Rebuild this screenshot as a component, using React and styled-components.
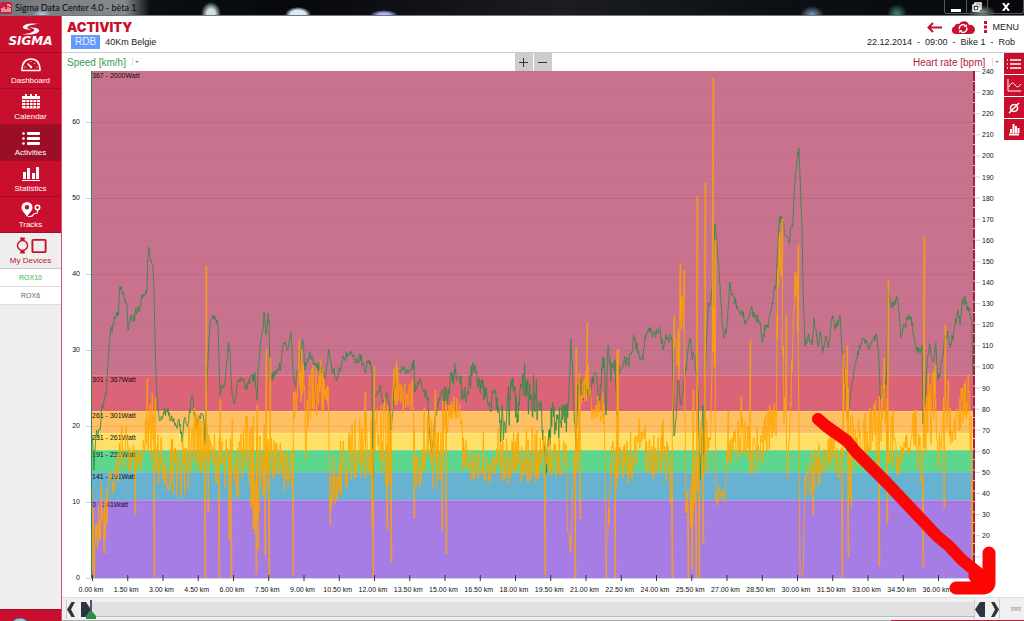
import React, { useState } from "react";
import styled, { createGlobalStyle, css } from "styled-components";

const GlobalStyle = createGlobalStyle`
  :root {
    --red: #c8102e;
    --darkRed: #9a0f26;
    --paleGray: #eeeeee;
    --ink: #2b3440;
    --green: #2e8b45;
  }

  * {
    box-sizing: border-box;
  }

  body {
    margin: 0;
    font-family: "Liberation Sans", Arial, sans-serif;
    color: #222;
    background: #fff;
  }

  button {
    border: none;
    padding: 0;
    background: none;
    font: inherit;
    color: inherit;
    cursor: pointer;
  }

  svg {
    display: block;
  }
`;

const Window = styled.div`
  min-height: 100vh;
  display: flex;
  flex-direction: column;
`;

/* title bar */

const TitleBar = styled.div`
  height: 16px;
  display: flex;
  justify-content: space-between;
  border-bottom: 1px solid #77747a;
  background:
    radial-gradient(ellipse 9px 6px at 42px 15px, #b9d6ee, transparent),
    linear-gradient(90deg, #74787c, #858a8e 125px, transparent 150px),
    radial-gradient(ellipse 10px 12px at 211px 14px, #cfe3da 40%, transparent),
    radial-gradient(ellipse 13px 8px at 298px 15px, #dbeaf7 60%, transparent),
    radial-gradient(ellipse 14px 5px at 384px 15px, #a9b4ff 40%, transparent),
    radial-gradient(ellipse 12px 9px at 812px 15px, #7ea6c8, transparent),
    radial-gradient(ellipse 10px 10px at 897px 14px, #3f8f72, transparent),
    radial-gradient(ellipse 14px 8px at 982px 13px, #8aa894, transparent),
    linear-gradient(90deg, #0d1218, #07090c 30%, #1b1d20 55%, #0c1014 75%, #07090b);
`;

const WindowTitle = styled.div`
  display: flex;
  align-items: center;
  gap: 3px;
  font-family: Lato, "Open Sans", sans-serif;
  font-size: 9px;
  line-height: 15px;
  color: #08090a;
`;

const WindowButtons = styled.div`
  display: flex;
  height: 14px;
  border: 1px solid #55585b;
  border-top: none;
  border-radius: 0 0 3px 3px;
`;

const WindowButton = styled.button`
  width: ${({ $wide }) => ($wide ? "36px" : "21px")};
  display: flex;
  align-items: center;
  justify-content: center;

  & + & {
    border-left: 1px solid #55585b;
  }
`;

/* sidebar */

const Body = styled.div`
  flex: 1;
  display: flex;
`;

const Sidebar = styled.aside`
  width: 62px;
  flex-shrink: 0;
  display: flex;
  flex-direction: column;
  background: var(--paleGray);
  border-right: 1px solid #d9506a;
`;

const Logo = styled.div`
  height: 37px;
  padding-top: 7px;
  display: flex;
  flex-direction: column;
  align-items: center;
  background: var(--red);
  border-bottom: 1px solid #a50d26;
  color: #fff;
`;

const LogoText = styled.span`
  font-family: "DejaVu Sans", sans-serif;
  font-size: 12px;
  line-height: 13px;
  font-weight: bold;
  font-style: italic;
`;

const NavItem = styled.button`
  height: 36px;
  padding-top: 5px;
  display: flex;
  flex-direction: column;
  align-items: center;
  justify-content: space-between;
  background: var(--red);
  border-bottom: 1px solid #a50d26;
  color: #fff;
  font-size: 8px;
  line-height: 14px;

  ${({ $active }) =>
    $active &&
    css`
      background: var(--darkRed);
    `}

  ${({ $light }) =>
    $light &&
    css`
      background: var(--paleGray);
      border-bottom: 1px solid #ccc;
      color: var(--red);
      padding-top: 4px;
    `}
`;

const Device = styled.button`
  height: 18px;
  background: #fff;
  border-bottom: 1px solid #ddd;
  font-size: 7px;
  color: ${({ $connected }) => ($connected ? "#35b53c" : "#666")};
`;

const SidebarFooter = styled.div`
  height: 13px;
  margin-top: auto;
  padding-left: 9px;
  background: var(--red);
  border-top: 1px solid #a50d26;
  overflow: hidden;
`;

/* header */

const Main = styled.main`
  flex: 1;
  min-width: 0;
  display: flex;
  flex-direction: column;
`;

const Header = styled.header`
  height: 37px;
  padding: 3px 5px 0;
  display: flex;
  justify-content: space-between;
  border-bottom: 1px solid #ccc;
`;

const Heading = styled.h1`
  margin: 0;
  font-family: Inter, sans-serif;
  font-size: 13px;
  line-height: 16px;
  font-weight: 900;
  color: var(--red);
`;

const Track = styled.div`
  display: flex;
  align-items: center;
  gap: 5px;
  padding-left: 4px;
  font-size: 9px;
`;

const Badge = styled.span`
  padding: 0 4px;
  background: #6699ff;
  color: #e8f0ff;
  font-size: 10px;
  line-height: 14px;
`;

const HeaderRight = styled.div`
  display: flex;
  flex-direction: column;
  align-items: flex-end;
  font-size: 9px;
`;

const Actions = styled.div`
  display: flex;
  align-items: center;
  gap: 9px;
  height: 16px;
`;

const MenuButton = styled.button`
  display: flex;
  align-items: center;
  gap: 6px;
`;

const Meta = styled.div`
  display: flex;
  gap: 5px;
  padding-right: 4px;
  line-height: 14px;
`;

/* chart */

const Content = styled.div`
  flex: 1;
  display: flex;
`;

const ChartColumn = styled.section`
  flex: 1;
  min-width: 0;
`;

const AxisBar = styled.div`
  height: 18px;
  padding: 0 5px;
  display: grid;
  grid-template-columns: 1fr auto 1fr;
  align-items: center;
`;

const AxisPicker = styled.label`
  display: flex;
  align-items: center;
  gap: 6px;
  justify-self: ${({ $right }) => ($right ? "end" : "start")};
  color: ${({ $right }) => ($right ? "#b01c3a" : "#3c9a52")};

  select {
    appearance: none;
    border: none;
    padding: 0;
    background: none;
    color: inherit;
    font-family: inherit;
    font-size: 10px;
  }
`;

const Caret = styled.span`
  height: 8px;
  padding: 3px 0 0 2px;
  border-left: 1px solid #ddd;

  &::after {
    content: "";
    display: block;
    border: 2px solid transparent;
    border-top-color: #888;
  }
`;

const ZoomButtons = styled.div`
  display: flex;
  gap: 1px;
`;

const ZoomButton = styled.button`
  width: 18px;
  height: 18px;
  display: flex;
  align-items: center;
  justify-content: center;
  background: #cdcdcd;
`;

const Chart = styled.svg`
  width: 100%;
  height: auto;
  overflow: visible;

  text {
    font-size: 7px;
    fill: #111;
  }
`;

const ToolRail = styled.div`
  width: 20px;
  display: flex;
  flex-direction: column;
  gap: 1px;
`;

const ToolButton = styled.button`
  height: 21px;
  display: flex;
  align-items: center;
  justify-content: center;
  background: var(--red);
`;

/* range bar under the chart */

const RangeBar = styled.div`
  height: 23px;
  padding: 2px 3px 2px 4px;
  display: flex;
  align-items: center;
  background: #f0f0f0;
  border-top: 1px solid #ddd;
`;

const RangeTrack = styled.div`
  position: relative;
  flex: 1;
  height: 15px;
  background: #e1e1e1;
  border-bottom: 1px solid #bbb;
`;

const Marker = styled.svg`
  position: absolute;
  left: -6px;
  top: -2px;
`;

const Handles = styled.div`
  height: 20px;
  display: flex;
  align-items: center;
  gap: 6px;
  border: solid #ccc;
  border-width: ${({ $end }) => ($end ? "0 1px" : "0 0 0 1px")};
`;

const Grip = styled.span`
  width: 10px;
  height: 4px;
  margin-left: 11px;
  background: #c8c8c8;
  border-top: 1px solid #bbb;
`;

const StatusLine = styled.div`
  height: 2px;
  display: flex;
  background: #aaa;

  &::after {
    content: "";
    width: 133px;
    margin-left: auto;
    background: #b5213d;
  }
`;

/* ---- chart data, in plot units ---- */

const LEFT = 92;
const RIGHT = 974;
const TOP = 71;
const BOTTOM = 578;

const zones = [
  { label: "367 - 2000Watt", y: 71, color: "#c8728d" },
  { label: "301 - 367Watt", y: 375, color: "#db6478" },
  { label: "261 - 301Watt", y: 411, color: "#ffc062" },
  { label: "231 - 261Watt", y: 433, color: "#ffe066" },
  { label: "191 - 231Watt", y: 450, color: "#5cd68c" },
  { label: "141 - 191Watt", y: 472, color: "#66b2d0" },
  { label: "0 - 141Watt", y: 500, color: "#a67de4" },
];

const speed = [
  92, 435, 94, 470, 96, 436, 100, 430, 102, 405, 104, 400, 106, 395, 108, 362,
  110, 335, 113, 325, 115, 318, 118, 316, 120, 286, 124, 296, 127, 310, 128, 330,
  130, 320, 133, 320, 136, 312, 140, 308, 143, 295, 147, 288, 148, 255, 149, 247,
  151, 260, 153, 265, 154, 290, 155, 340, 156, 375, 158, 410, 160, 420, 164, 414,
  168, 408, 171, 420, 175, 423, 180, 424, 182, 442, 184, 420, 188, 425, 192, 395,
  194, 415, 197, 425, 201, 413, 204, 420, 205, 445, 206, 410, 207, 380, 209, 340,
  211, 320, 213, 315, 217, 320, 218, 325, 220, 395, 222, 388, 225, 384, 228, 345,
  230, 350, 232, 395, 234, 404, 237, 385, 242, 380, 247, 388, 250, 378, 255, 376,
  256, 390, 257, 400, 258, 370, 260, 350, 263, 330, 264, 312, 266, 335, 268, 313,
  269, 320, 270, 378, 276, 374, 281, 365, 283, 345, 285, 342, 288, 348, 291, 333,
  293, 370, 295, 384, 299, 368, 301, 350, 303, 341, 305, 370, 310, 353, 315, 365,
  320, 367, 325, 375, 329, 350, 332, 370, 337, 377, 342, 362, 348, 354, 353, 357,
  358, 361, 360, 354, 365, 371, 369, 360, 372, 372, 373, 500, 374, 400, 376, 395,
  380, 385, 383, 402, 387, 395, 390, 412, 391, 430, 394, 390, 398, 370, 402, 368,
  406, 374, 411, 370, 414, 363, 415, 392, 420, 378, 424, 390, 428, 397, 429, 425,
  431, 453, 434, 430, 438, 405, 442, 390, 448, 400, 450, 378, 455, 373, 459, 377,
  463, 395, 467, 395, 472, 370, 476, 373, 482, 388, 487, 395, 490, 408, 495, 390,
  500, 420, 505, 428, 510, 400, 515, 398, 518, 422, 520, 390, 524, 378, 527, 390,
  530, 400, 535, 395, 540, 410, 543, 430, 546, 465, 549, 440, 552, 410, 556, 430,
  560, 420, 562, 405, 565, 420, 568, 405, 570, 370, 571, 339, 573, 385, 576, 440,
  578, 385, 583, 390, 587, 395, 592, 383, 594, 373, 599, 398, 602, 372, 604, 358,
  606, 415, 608, 345, 611, 373, 615, 360, 617, 415, 619, 365, 624, 360, 629, 363,
  634, 337, 638, 352, 643, 360, 645, 335, 650, 332, 655, 333, 660, 329, 663, 350,
  666, 338, 672, 338, 674, 436, 676, 420, 678, 380, 681, 405, 686, 370, 690, 338,
  692, 360, 694, 355, 698, 390, 700, 480, 703, 405, 704, 470, 705, 410, 706, 350,
  708, 310, 710, 303, 712, 290, 713, 270, 715, 224, 718, 260, 720, 285, 722, 320,
  724, 338, 727, 327, 729, 300, 730, 282, 732, 295, 736, 302, 740, 315, 742, 310,
  745, 324, 751, 309, 756, 318, 760, 322, 762, 341, 766, 325, 768, 328, 772, 303,
  776, 285, 779, 225, 780, 219, 783, 222, 785, 235, 789, 243, 793, 220, 795, 180,
  798, 155, 799, 148, 800, 175, 802, 225, 803, 290, 805, 346, 808, 335, 812, 345,
  814, 318, 818, 347, 820, 332, 823, 350, 826, 337, 828, 348, 832, 319, 836, 328,
  840, 315, 842, 350, 844, 370, 847, 405, 848, 419, 851, 390, 855, 365, 860, 345,
  866, 340, 870, 347, 873, 340, 877, 335, 879, 360, 880, 395, 883, 393, 886, 385,
  887, 360, 888, 290, 892, 308, 895, 300, 898, 302, 901, 335, 905, 325, 909, 319,
  912, 322, 916, 350, 920, 353, 922, 345, 923, 424, 926, 382, 928, 355, 930, 345,
  933, 362, 936, 347, 938, 380, 942, 362, 945, 335, 948, 335, 950, 348, 954, 330,
  958, 310, 960, 325, 962, 302, 964, 305, 965, 296, 967, 310, 970, 313, 972, 325,
  973, 400,
];

// x, middle, swing
const power = [
  [92, 530, 45], [100, 510, 30], [106, 515, 28], [109, 485, 22], [114, 470, 22],
  [120, 455, 28], [126, 445, 24], [134, 458, 18], [142, 465, 14], [147, 430, 26],
  [153, 430, 36], [158, 450, 34], [165, 480, 16], [172, 460, 34], [184, 470, 32],
  [196, 445, 34], [204, 450, 34], [212, 450, 26], [222, 465, 28], [238, 470, 30],
  [246, 440, 28], [254, 490, 60], [262, 460, 40], [276, 460, 20], [292, 475, 26],
  [294, 400, 20], [301, 370, 34], [306, 430, 40], [310, 398, 30], [318, 390, 30],
  [328, 392, 14], [330, 490, 24], [340, 470, 30], [352, 450, 30], [366, 445, 34],
  [380, 440, 40], [390, 450, 60], [394, 385, 24], [398, 380, 24], [402, 400, 14],
  [413, 388, 22], [415, 470, 22], [421, 470, 16], [424, 440, 36], [433, 455, 36],
  [441, 440, 50], [447, 420, 18], [452, 408, 12], [460, 404, 14], [463, 450, 22],
  [472, 470, 16], [484, 455, 24], [489, 480, 12], [498, 455, 30], [520, 460, 30],
  [535, 455, 30], [552, 455, 22], [566, 460, 20], [568, 540, 10], [571, 545, 6],
  [573, 470, 16], [576, 480, 50], [580, 400, 16], [587, 380, 30], [592, 415, 10],
  [604, 405, 20], [606, 555, 20], [609, 510, 20], [611, 460, 28], [624, 470, 26],
  [640, 440, 28], [652, 460, 26], [662, 445, 26], [671, 480, 26], [674, 350, 20],
  [679, 350, 30], [681, 310, 26], [684, 315, 15], [686, 520, 26], [693, 500, 30],
  [698, 470, 40], [704, 450, 50], [710, 450, 20], [714, 290, 60], [716, 500, 10],
  [720, 490, 12], [725, 500, 3], [727, 455, 12], [736, 440, 24], [742, 430, 26],
  [750, 455, 26], [762, 445, 22], [772, 420, 30], [776, 440, 30], [778, 260, 30],
  [781, 255, 30], [784, 400, 40], [788, 475, 12], [791, 390, 20], [795, 290, 18],
  [797, 285, 20], [799, 440, 30], [800, 576, 1], [803, 576, 1], [805, 490, 16],
  [812, 470, 26], [824, 462, 18], [832, 445, 20], [841, 465, 20], [845, 390, 40],
  [850, 450, 50], [860, 445, 24], [880, 430, 40], [884, 390, 14], [888, 430, 40],
  [893, 450, 28], [898, 465, 12], [906, 445, 14], [914, 425, 24], [920, 455, 30],
  [926, 430, 50], [934, 400, 34], [940, 460, 24], [946, 410, 40], [954, 432, 12],
  [960, 410, 20], [968, 400, 24], [971, 440, 30], [973, 540, 30],
];

const spikes = [
  [94, 578], [104, 553], [135, 515], [147, 379], [152, 393], [155, 398], [154, 577],
  [194, 408], [205, 578], [206, 266], [208, 512], [219, 578], [220, 400], [229, 540],
  [231, 578], [232, 420], [253, 417], [256, 574], [258, 550], [257, 405], [266, 349],
  [265, 555], [269, 578], [270, 358], [293, 575], [299, 340], [302, 365], [316, 368],
  [320, 360], [330, 525], [365, 392], [372, 526], [374, 366], [373, 578], [387, 530],
  [391, 562], [396, 366], [412, 380], [414, 518], [424, 408], [435, 390], [442, 530],
  [446, 554], [545, 575], [570, 552], [575, 578], [576, 348], [580, 519], [579, 373],
  [587, 323], [606, 578], [615, 578], [617, 350], [618, 350], [663, 420], [672, 578],
  [674, 316], [680, 264], [684, 270], [688, 578], [692, 569], [693, 390], [696, 578],
  [697, 196], [699, 578], [703, 543], [705, 183], [713, 78], [715, 240], [717, 505],
  [728, 411], [741, 397], [750, 341], [777, 314], [779, 237], [782, 219], [786, 315],
  [785, 404], [795, 272], [798, 245], [813, 515], [842, 578], [843, 354], [848, 557],
  [847, 346], [851, 507], [865, 413], [879, 566], [884, 358], [888, 281], [887, 524],
  [893, 410], [923, 567], [924, 237], [928, 373], [935, 365], [944, 508], [945, 325],
  [948, 380], [964, 384], [968, 375], [972, 562],
];

const makeRandom = (seed) => () => {
  seed = (seed * 16807) % 2147483647;
  return (seed / 2147483647) * 2 - 1;
};

const toPath = (points) => "M" + points.map((p) => p.map((n) => n.toFixed(1)).join(",")).join("L");

const buildSpeed = () => {
  const random = makeRandom(77);
  const points = [];
  for (let i = 0; i < speed.length - 2; i += 2) {
    const [x0, y0, x1, y1] = speed.slice(i, i + 4);
    const rough = x0 > 495 && x0 < 570 ? 22 : x0 > 440 && x0 < 620 ? 11 : 5;
    points.push([x0, y0]);
    for (let x = x0 + 0.7; x < x1; x += 0.7) {
      points.push([x, y0 + ((y1 - y0) * (x - x0)) / (x1 - x0) + random() * rough]);
    }
  }
  return toPath(points);
};

const buildPower = () => {
  const random = makeRandom(4242);
  const points = [];
  for (let i = 0; i < power.length - 1; i++) {
    const [x0, mid0, swing0] = power[i];
    const [x1, mid1, swing1] = power[i + 1];
    for (let x = x0; x < x1; x += 0.6) {
      const t = (x - x0) / (x1 - x0);
      const y = mid0 + (mid1 - mid0) * t + random() * (swing0 + (swing1 - swing0) * t);
      points.push([x, Math.min(y, BOTTOM)]);
    }
  }
  spikes.forEach(([x, y]) => {
    const at = points.findIndex((p) => p[0] >= x);
    points.splice(at, 0, [x, y], [x + 0.8, y]);
  });
  return toPath(points);
};

const speedPath = buildSpeed();
const powerPath = buildPower();

const range = (count) => Array.from({ length: count }, (_, i) => i);

const ActivityChart = () => (
  <Chart viewBox="62 71 942 526" role="img" aria-label="Speed and power over distance">
    {zones.map(({ y, color }, i) => (
      <rect
        key={color}
        x={LEFT}
        y={y}
        width={RIGHT - LEFT}
        height={(zones[i + 1] ? zones[i + 1].y : BOTTOM) - y}
        fill={color}
      />
    ))}
    {zones.slice(1).map(({ y }) => (
      <path key={y} d={`M${LEFT} ${y + 0.5}H${RIGHT}`} stroke="#fff" strokeOpacity="0.2" />
    ))}
    {range(6).map((i) => (
      <path key={i} d={`M${LEFT} ${122.5 + i * 76}H${RIGHT}`} stroke="#803050" strokeOpacity="0.12" />
    ))}
    {range(24).map((i) => (
      <path key={i} d={`M${LEFT} ${71.5 + i * 21.1}H${RIGHT}`} stroke="#803050" strokeOpacity="0.04" />
    ))}

    {zones.map(({ label, y }) => (
      <text key={label} x="92" y={y + 7}>
        {label}
      </text>
    ))}

    <path d={speedPath} fill="none" stroke="#2e8b45" strokeWidth="1" strokeOpacity="0.85" />
    <path d={powerPath} fill="none" stroke="#ffa500" strokeWidth="1" strokeOpacity="0.82" />

    {/* left axis */}
    <path d={`M91.5 ${TOP}V${BOTTOM}`} stroke="#2e8b45" />
    {range(7).map((i) => (
      <g key={i}>
        <path d={`M86 ${BOTTOM - i * 76 + 0.5}h5`} stroke="#c5d5e3" />
        <text x="80" y={BOTTOM - i * 76 + 2} textAnchor="end">
          {i * 10}
        </text>
      </g>
    ))}

    {/* right axis */}
    <path d={`M974 ${TOP}V${BOTTOM}`} stroke="#a8203c" strokeWidth="2" />
    {range(48).map((i) => (
      <path key={i} d={`M973 ${81.5 + i * 10.5}h2`} stroke="#f0c8d0" />
    ))}
    {range(24).map((i) => {
      const y = 71.5 + i * 21.1;
      return (
        <g key={i}>
          <path d={`M975 ${y}h5`} stroke="#c5d5e3" />
          {i < 23 && (
            <text x="982" y={y + 2.5}>
              {240 - i * 10}
            </text>
          )}
        </g>
      );
    })}

    {/* distance axis */}
    <path d={`M86 ${BOTTOM + 0.5}H978`} stroke="#c5d5e3" />
    {range(25).map((i) => (
      <g key={i}>
        <path d={`M${92.5 + i * 35.25} 575v6`} stroke="#333" />
        <text x={91 + i * 35.25} y="592" textAnchor="middle">
          {(i * 1.5).toFixed(2)} km
        </text>
      </g>
    ))}

    {/* annotation */}
    <g fill="none" stroke="#fb0505" strokeLinecap="round" strokeLinejoin="round">
      <path d="M818 419L826 426L847 441L856 452L887 483L937 536L949 546L962 560L982 576" strokeWidth="12" />
      <path d="M989 553V582Q989 588 983 588L956 588" strokeWidth="13" />
      <path d="M976 576L984 583" strokeWidth="15" />
    </g>
  </Chart>
);

/* ---- icons ---- */

const DashboardIcon = () => (
  <svg width="20" height="14" viewBox="0 0 20 14" fill="none" stroke="#fff" strokeWidth="1.5">
    <path d="M1 12.5C1 5 4.500 1 10 1s9 4 9 11.500z" strokeLinejoin="round" />
    <path d="M10 9L6.500 5.500" />
    <circle cx="10" cy="9" r="1.200" fill="#fff" stroke="none" />
    <path d="M3.500 9h1M15.500 9h1M14 5l-.8.8M10 3v1" strokeWidth="1" />
  </svg>
);

const CalendarIcon = () => (
  <svg width="20" height="15" viewBox="0 0 20 15" fill="#fff">
    <path d="M1 2h18v3H1zM4 0h2v3H4zM9 0h2v3H9zM14 0h2v3h-2z" />
    <path d="M1 5.500h18V13q0 1.500-1.500 1.500h-15Q1 14.500 1 13z" />
    <path d="M1 5.500h18M1 8.500h18M1 11.500h18M5 6v8M8.500 6v8M12 6v8M15.500 6v8" stroke="#c8102e" strokeWidth=".9" />
  </svg>
);

const ListIcon = () => (
  <svg width="18" height="15" viewBox="0 0 18 15" fill="#fff">
    {[2, 7, 12].map((y) => (
      <g key={y}>
        <circle cx="1.500" cy={y + 1.500} r="1.300" />
        <rect x="5" y={y} width="13" height="3" rx="1" />
      </g>
    ))}
  </svg>
);

const StatisticsIcon = () => (
  <svg width="18" height="15" viewBox="0 0 18 15" fill="#fff">
    <path d="M0 14h18v1H0zM1 6h3v7H1zM5 2h3v11H5zM10 7h3v6h-3zM14 1h3v12h-3z" />
  </svg>
);

const TracksIcon = () => (
  <svg width="20" height="16" viewBox="0 0 20 16">
    <path
      d="M6 0a5.500 5.500 0 0 1 5.500 5.500C11.500 9 8 11 6 15C4 11 .5 9 .5 5.500A5.500 5.500 0 0 1 6 0zM6 3a2.300 2.300 0 1 0 0 4.600A2.300 2.300 0 0 0 6 3z"
      fill="#fff"
      fillRule="evenodd"
    />
    <circle cx="16.500" cy="5.500" r="2.200" fill="none" stroke="#fff" strokeWidth="1.500" />
    <path d="M16.500 8v2q0 1.500-2 1.500t-2.500 1.500-3 1.500H7" fill="none" stroke="#fff" strokeWidth="1.200" />
  </svg>
);

const DevicesIcon = () => (
  <svg width="34" height="18" viewBox="0 0 34 18" fill="none" stroke="#c8102e" strokeWidth="1.500">
    <circle cx="8" cy="9" r="5.300" />
    <path d="M5.500 1.500h5M6 3h4M6 15h4M5.500 16.500h5" strokeWidth="2" />
    <rect x="18.500" y="3" width="14" height="13" rx="1" strokeWidth="2" />
  </svg>
);

const SigmaMark = () => (
  <svg width="18" height="12" viewBox="0 0 18 12" fill="#fff">
    <path d="M18 1C12 0 3 0 1 3.500C0 6 4 6.500 9 6.500C5 5.500 4 4.500 7 2.800C10 1.500 14 1 18 1z" />
    <path d="M0 11C5 12 14 12 17 8.500C18 6 15 4.500 7 4.500C12 5.500 14 6.500 11 8.500C8 10.500 4 11 0 11z" />
  </svg>
);

const BackIcon = () => (
  <svg width="15" height="11" viewBox="0 0 15 11" fill="none" stroke="#c8102e" strokeWidth="2">
    <path d="M15 5.500H1.500M6 1L1.500 5.500L6 10" />
  </svg>
);

const CloudSyncIcon = () => (
  <svg width="24" height="13" viewBox="0 0 24 13">
    <path d="M4 13A4 4 0 0 1 3.500 5.300A3.500 3.500 0 0 1 8 3A5.500 5.500 0 0 1 18 4A4.500 4.500 0 0 1 20.500 13z" fill="#c8102e" />
    <g fill="none" stroke="#fff" strokeWidth="1.400">
      <path d="M8.500 8A3.500 3.500 0 0 1 14.500 4.800M15.500 6.500A3.500 3.500 0 0 1 9.500 10" />
    </g>
    <path d="M15.800 3v3h-3zM8.200 12V9h3z" fill="#fff" />
  </svg>
);

const DotsIcon = () => (
  <svg width="3" height="12" viewBox="0 0 3 12" fill="#c8102e">
    <path d="M0 0h3v3H0zM0 4.500h3v3H0zM0 9h3v3H0z" />
  </svg>
);

const navItems = [
  { label: "Dashboard", icon: <DashboardIcon /> },
  { label: "Calendar", icon: <CalendarIcon /> },
  { label: "Activities", icon: <ListIcon /> },
  { label: "Statistics", icon: <StatisticsIcon /> },
  { label: "Tracks", icon: <TracksIcon /> },
];

const tools = [
  { label: "List", path: "M0 3h1M3 3h11M0 7h1M3 7h11M0 11h1M3 11h11" },
  { label: "Graph", path: "M1 0v12h13M2 8C4 3 6 3 8 6s4 2 6-1", width: 1 },
  { label: "Average", path: "M7 3.500a3.500 3.500 0 1 0 .1 0M2 12L12 2" },
  { label: "Laps", path: "M2 11.500h10M4 10V6M6.500 10V1M9 10V3M11.500 10V5", width: 2 },
];

const App = () => {
  const [page, setPage] = useState("Activities");

  return (
    <Window>
      <GlobalStyle />
      <TitleBar>
        <WindowTitle>
          <svg width="12" height="12" viewBox="0 0 12 12">
            <rect width="12" height="12" rx="2" fill="#c8203a" />
            <path d="M2 10V6M4 10V5M6 10V7M8 10V5M10 10V6M7 3h3v2" stroke="#fff" fill="none" />
          </svg>
          Sigma Data Center 4.0 - bèta 1
        </WindowTitle>
        <WindowButtons>
          <WindowButton aria-label="Minimize">
            <svg width="10" height="10">
              <path d="M0 8.500h10" stroke="#fff" strokeWidth="3" />
            </svg>
          </WindowButton>
          <WindowButton aria-label="Restore">
            <svg width="10" height="10" fill="none" stroke="#fff" strokeWidth="1.500">
              <path d="M3 2.500V1h6v6H7.500M1 3h6v6H1zM3.500 5.500h1v1h-1z" />
            </svg>
          </WindowButton>
          <WindowButton $wide aria-label="Close">
            <svg width="8" height="8">
              <path d="M1 0l6 8M7 0L1 8" stroke="#fff" strokeWidth="2" />
            </svg>
          </WindowButton>
        </WindowButtons>
      </TitleBar>

      <Body>
        <Sidebar>
          <Logo>
            <SigmaMark />
            <LogoText>SIGMA</LogoText>
          </Logo>
          {navItems.map(({ label, icon }) => (
            <NavItem key={label} $active={label === page} onClick={() => setPage(label)}>
              {icon}
              {label}
            </NavItem>
          ))}
          <NavItem $light>
            <DevicesIcon />
            My Devices
          </NavItem>
          <Device $connected>ROX10</Device>
          <Device>ROX6</Device>
          <SidebarFooter>
            <svg width="22" height="22" viewBox="0 0 22 22">
              <circle cx="11" cy="18" r="10" fill="#a9c3d3" stroke="#4a6687" />
              <path d="M5 13q3-3 6-2l2 3-5 2z" fill="#c96a5b" />
            </svg>
          </SidebarFooter>
        </Sidebar>

        <Main>
          <Header>
            <div>
              <Heading>ACTIVITY</Heading>
              <Track>
                <Badge>RDB</Badge>
                <span>40Km Belgie</span>
              </Track>
            </div>
            <HeaderRight>
              <Actions>
                <button aria-label="Back">
                  <BackIcon />
                </button>
                <button aria-label="Sync">
                  <CloudSyncIcon />
                </button>
                <MenuButton>
                  <DotsIcon />
                  MENU
                </MenuButton>
              </Actions>
              <Meta>
                <span>22.12.2014</span>
                <span>-</span>
                <span>09:00</span>
                <span>-</span>
                <span>Bike 1</span>
                <span>-</span>
                <span>Rob</span>
              </Meta>
            </HeaderRight>
          </Header>

          <Content>
            <ChartColumn>
              <AxisBar>
                <AxisPicker>
                  <select aria-label="Left axis">
                    <option>Speed [km/h]</option>
                  </select>
                  <Caret />
                </AxisPicker>
                <ZoomButtons>
                  <ZoomButton aria-label="Zoom in">
                    <svg width="9" height="9">
                      <path d="M0 4.500h9M4.500 0v9" stroke="#2b3440" />
                    </svg>
                  </ZoomButton>
                  <ZoomButton aria-label="Zoom out">
                    <svg width="9" height="9">
                      <path d="M0 4.500h9" stroke="#2b3440" />
                    </svg>
                  </ZoomButton>
                </ZoomButtons>
                <AxisPicker $right>
                  <select aria-label="Right axis">
                    <option>Heart rate [bpm]</option>
                  </select>
                  <Caret />
                </AxisPicker>
              </AxisBar>
              <ActivityChart />
            </ChartColumn>
            <ToolRail>
              {tools.map(({ label, path, width = 1.5 }) => (
                <ToolButton key={label} aria-label={label}>
                  <svg width="14" height="13" viewBox="0 0 14 13" fill="none" stroke="#fff" strokeWidth={width}>
                    <path d={path} />
                  </svg>
                </ToolButton>
              ))}
            </ToolRail>
          </Content>

          <RangeBar>
            <Handles>
              <button aria-label="Scroll left">
                <svg width="8" height="15" fill="#2b3440">
                  <path d="M8 0L4 7.500L8 15H4.500L0 7.500L4.500 0z" />
                </svg>
              </button>
              <button aria-label="Range start">
                <svg width="10" height="15" fill="#2b3440">
                  <path d="M0 0h5l5 7.500L5 15H0z" />
                </svg>
              </button>
            </Handles>
            <RangeTrack>
              <Marker width="12" height="20">
                <path d="M6 0v12" stroke="#555" strokeWidth="2" />
                <path d="M6 10l5 6v3H1v-3z" fill="#2e8b45" />
              </Marker>
            </RangeTrack>
            <Handles $end>
              <button aria-label="Range end">
                <svg width="10" height="15" fill="#2b3440">
                  <path d="M10 0H5L0 7.500L5 15h5z" />
                </svg>
              </button>
              <button aria-label="Scroll right">
                <svg width="8" height="15" fill="#2b3440">
                  <path d="M0 0l4 7.500L0 15h3.500L8 7.500L3.500 0z" />
                </svg>
              </button>
            </Handles>
            <Grip />
          </RangeBar>
          <StatusLine />
        </Main>
      </Body>
    </Window>
  );
};

export default App;
